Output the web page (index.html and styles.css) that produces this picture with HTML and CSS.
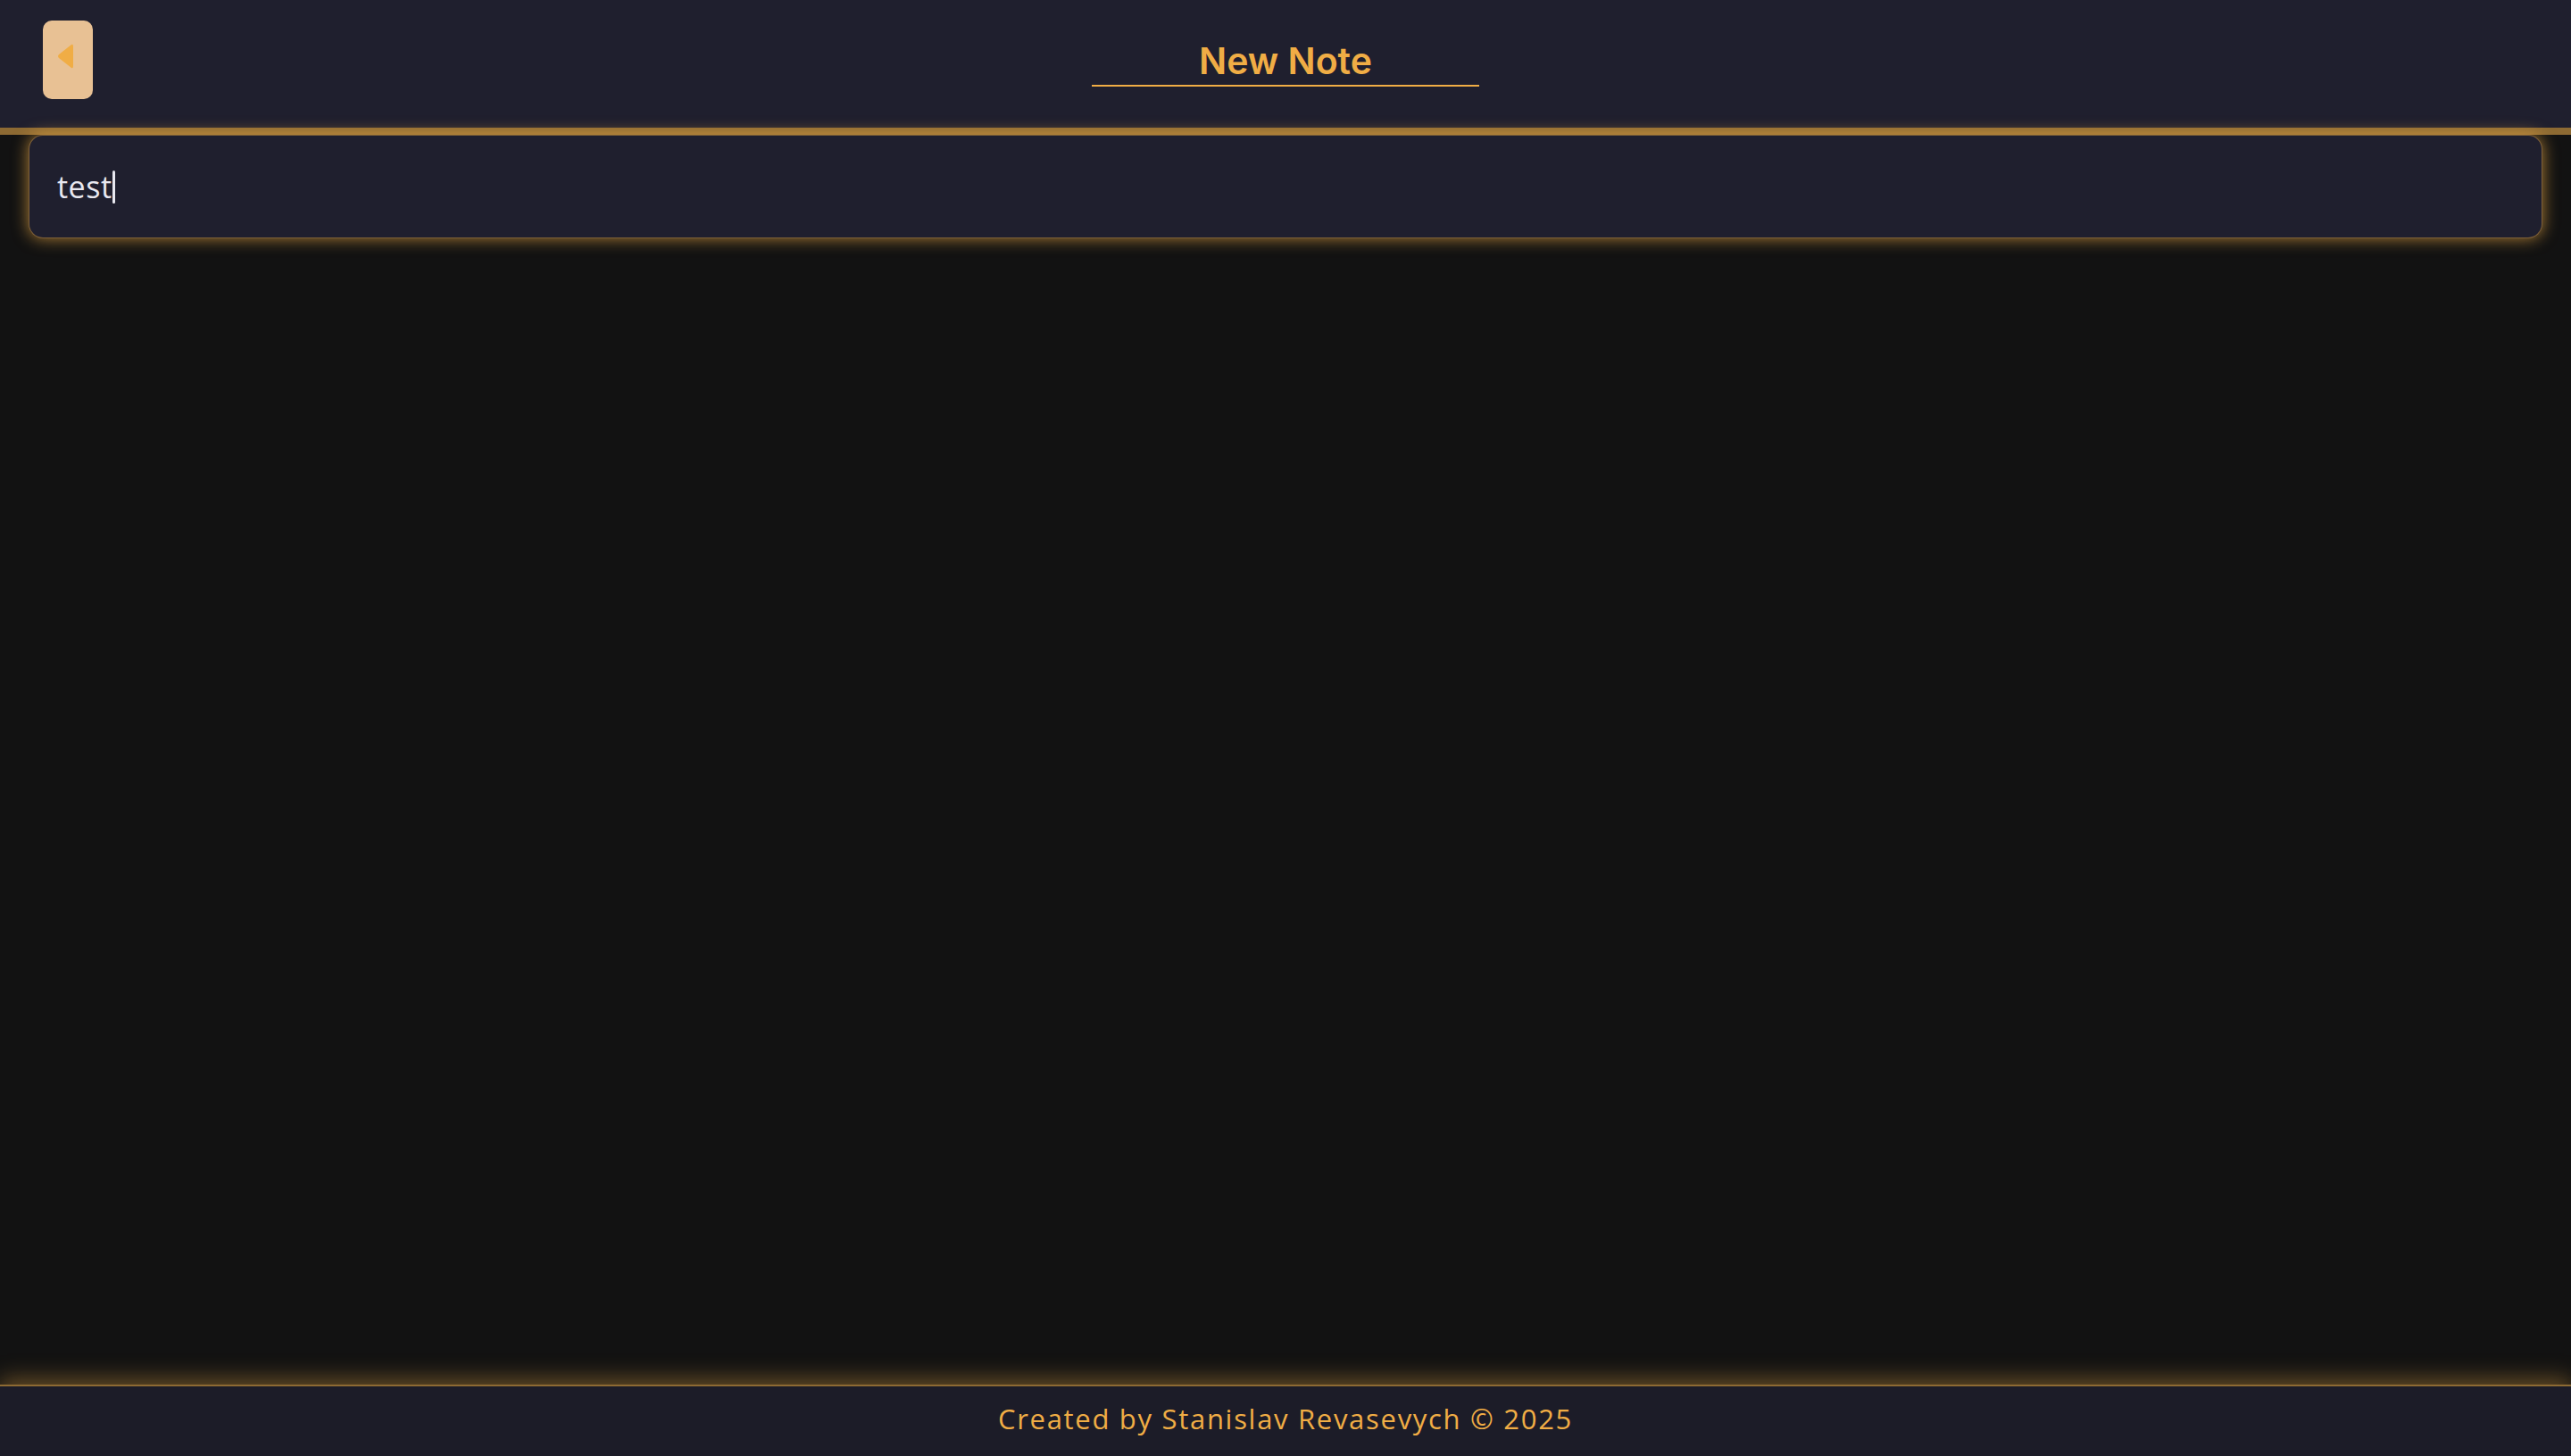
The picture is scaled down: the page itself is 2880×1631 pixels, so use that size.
FILE: index.html
```html
<!DOCTYPE html>
<html lang="en">
<head>
<meta charset="utf-8">
<title>New Note</title>
<link rel="stylesheet" href="styles.css">
</head>
<body>
<div class="app">
  <header class="header">
    <div class="header-left">
      <button class="back-btn" aria-label="Back">
        <svg width="20" height="32" viewBox="0 0 20 32"><path d="M17 3 Q19 2 19 5 L19 27 Q19 30 17 29 L3 18 Q1 16 3 14 Z" fill="#f0ad45"/></svg>
      </button>
    </div>
    <h1 class="title">New Note</h1>
    <div class="header-right"></div>
  </header>
  <main class="main">
    <div class="note-input"><span class="note-text">test</span><span class="caret"></span></div>
  </main>
  <footer class="footer">Created by Stanislav Revasevych © 2025</footer>
</div>
</body>
</html>
```
FILE: styles.css
```css
* { box-sizing: border-box; }
html, body { margin: 0; padding: 0; height: 100%; }
body { background: #121212; font-family: "Open Sans", "Liberation Sans", sans-serif; }
.app { display: flex; flex-direction: column; min-height: 100vh; }
.header {
  height: 151px;
  background: #1f1f2e;
  border-bottom: 8px solid #8d6a33;
  display: grid;
  grid-template-columns: 1fr auto 1fr;
  align-items: start;
  padding: 23px 48px 0;
}
.back-btn {
  width: 56px; height: 88px;
  border: none; border-radius: 10px;
  background: #e8c194;
  display: flex; align-items: flex-start; justify-content: flex-start;
  padding: 24px 0 0 15px;
  cursor: pointer;
}
.title {
  margin: 21px 0 0;
  padding: 0 120px 3px;
  font-family: "Inter", "Lato", sans-serif;
  font-weight: 600;
  font-size: 41px;
  line-height: 48px;
  color: #f0ad45;
  border-bottom: 2px solid #f0ad45;
  text-align: center;
}
.main { flex: 1; padding: 0 32px; }
.note-input {
  height: 116px;
  background: #1f1f2e;
  border-radius: 16px;
  border: 1px solid rgba(240, 173, 69, 0.45);
  box-shadow: 0 0 18px rgba(240, 173, 69, 0.7);
  display: flex; align-items: center;
  padding: 0 31px;
  font-family: "Open Sans", sans-serif;
  font-size: 34px;
  letter-spacing: 0.5px;
  color: #e8e8f0;
}
.caret { width: 3px; height: 37px; background: #e8e8f0; border-radius: 2px; margin-left: 0; }
.footer {
  height: 80px;
  background: #1c1c28;
  border-top: 2px solid #8d6a33;
  box-shadow: 0 -6px 24px rgba(240, 173, 69, 0.4);
  display: flex; align-items: center; justify-content: center;
  color: #f0ad45;
  font-size: 31px;
  letter-spacing: 1.7px;
  padding-bottom: 6px;
}
```
